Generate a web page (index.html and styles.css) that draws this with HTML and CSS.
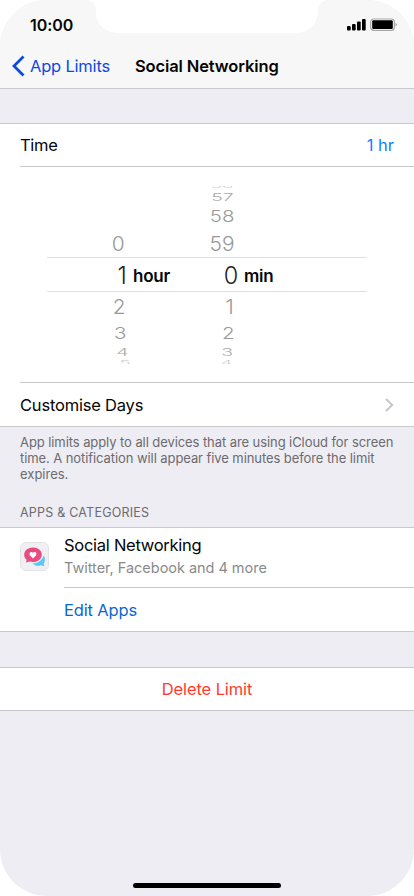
FILE: index.html
```html
<!DOCTYPE html>
<html lang="en">
<head>
<meta charset="utf-8">
<title>App Limits</title>
<link rel="stylesheet" href="styles.css">
</head>
<body>
<main class="phone">
  <header class="header">
    <svg class="notch" width="240" height="34" viewBox="0 0 240 34"><path d="M0 0C5 1 8 4 8 10V12C8 25 17 33 33 33H206C221 33 230 24 230 11C230 4 234 1 239 0Z" fill="#fff"/></svg>
    <div class="status">
      <span class="clock">10:00</span>
      <svg width="52" height="14" viewBox="0 0 52 14">
        <rect x="1" y="8" width="3.7" height="4.5" rx="1"/><rect x="6" y="6" width="3.7" height="6.500" rx="1"/><rect x="11" y="3.500" width="3.700" height="9" rx="1"/><rect x="16" y="1" width="3.700" height="11.500" rx="1"/>
        <rect x="24.700" y="1" width="23.600" height="11.300" rx="3" fill="#fff" stroke="#a5a5a5" stroke-width="1.200"/><rect x="26.200" y="2.300" width="20.600" height="8.700" rx="1.200"/><path d="M49.500 4.700Q52.500 6.600 49.500 8.500Z" fill="#a5a5a5"/>
      </svg>
    </div>
    <nav class="nav">
      <svg class="back" width="13" height="22" viewBox="0 0 13 22"><path d="M11.500 1.500L2 11L11.500 20.500" fill="none" stroke="#0b49e5" stroke-width="2.800"/></svg>
      <span class="parent">App Limits</span>
      <h1 class="title">Social Networking</h1>
    </nav>
  </header>

  <section class="group">
    <div class="row time"><span class="t-time">Time</span><span class="value">1 hr</span></div>
    <div class="picker">
      <div class="wheel hours">
        <span class="edge top"></span><span class="far up"></span><span class="mid up"></span>
        <span class="near up"><i>0</i></span>
        <span class="now"><i>1</i></span>
        <span class="near down"><i>2</i></span><span class="mid down"><i>3</i></span><span class="far down"><i>4</i></span><span class="edge bottom"><i>5</i></span>
      </div>
      <b class="unit hour">hour</b>
      <div class="wheel minutes">
        <span class="edge top"><i>56</i></span><span class="far up"><i>57</i></span><span class="mid up"><i>58</i></span>
        <span class="near up"><i>59</i></span>
        <span class="now"><i>0</i></span>
        <span class="near down"><i>1</i></span><span class="mid down"><i>2</i></span><span class="far down"><i>3</i></span><span class="edge bottom"><i>4</i></span>
      </div>
      <b class="unit min">min</b>
    </div>
    <div class="row customise"><span class="t-custom">Customise Days</span>
      <svg width="9" height="14" viewBox="0 0 9 14"><path d="M1 1L7.300 7L1 13" fill="none" stroke="#c4c4c9" stroke-width="1.800"/></svg>
    </div>
  </section>

  <p class="note"><span class="n1">App limits apply to all devices that are using iCloud for screen</span><br><span class="n2">time. A notification will appear five minutes before the limit</span><br><span class="n3">expires.</span></p>
  <h2 class="heading">APPS &amp; CATEGORIES</h2>

  <section class="group apps">
    <svg class="icon" width="29" height="29" viewBox="0 0 29 29">
      <rect x=".5" y=".5" width="28" height="28" rx="5.500" fill="#efeff4" stroke="#e2e2e7"/>
      <path d="M23.500 13.500C25.800 16.500 25 20 23.700 21.300L24.200 24.200L21 23.300C18 24.500 14.500 23.500 12.700 21.500C18.500 21.200 22.500 18 23.500 13.500Z" fill="#5ac8fa"/>
      <path d="M13 5.500C18 5.500 21.800 8.600 21.800 12.700S18 20 13 20C11.800 20 10.800 19.800 9.800 19.500L6 20.500L6.600 17.700C4.900 16.500 4.200 14.700 4.200 12.700C4.200 8.600 8 5.500 13 5.500Z" fill="#ea4c80"/>
      <path d="M13 16.500L10.300 13.700C8.200 11.500 11 8.300 13 10.800C15 8.300 17.800 11.500 15.700 13.700Z" fill="#fff"/>
    </svg>
    <div class="list">
      <div class="app"><span class="name">Social Networking</span><span class="sub">Twitter, Facebook and 4 more</span></div>
      <div class="edit"><span class="t-edit">Edit Apps</span></div>
    </div>
  </section>

  <section class="group delete"><span class="t-delete">Delete Limit</span></section>
  <div class="home"></div>
</main>
</body>
</html>
```
FILE: styles.css
```css
* { box-sizing: border-box; }
body { margin: 0; background: #fff; font-family: Inter, "Liberation Sans", sans-serif; font-size: 16.5px; color: #050505; }
.phone { position: relative; width: 414px; height: 896px; overflow: hidden; background: #eeedf3; border-radius: 47px; }
svg { display: block; flex: none; }
span, b, h1 { white-space: nowrap; }
.header { position: relative; height: 89px; background: #f7f7f7; border-bottom: 1px solid #c9c9cc; }
.notch { position: absolute; left: 88px; top: 0; }
.status { height: 44px; display: flex; justify-content: space-between; align-items: center; padding: 5px 16px 0 30px; }
.clock { font-weight: 600; font-size: 16px; letter-spacing: -.05px; }
.nav { height: 44px; display: flex; align-items: center; padding-left: 12px; }
.parent { margin-left: 5px; width: 105px; color: #0b49e5; letter-spacing: -.2px; }
.title { margin: 0; font-size: 16.5px; font-weight: 600; letter-spacing: -.12px; }
.group { background: #fff; border-top: 1px solid #c9c9cc; border-bottom: 1px solid #c9c9cc; margin-top: 34px; }
.row { display: flex; justify-content: space-between; align-items: center; height: 43px; padding-right: 20px; margin-left: 20px; }
.time { border-bottom: 1px solid #c9c9cc; }
.t-time { letter-spacing: -.3px; }
.t-custom { letter-spacing: -.2px; }
.value { color: #157efb; }
.customise { height: 44px; border-top: 1px solid #c9c9cc; }
.picker { height: 215px; display: flex; justify-content: flex-start; padding: 19px 47px 0; background: linear-gradient(#e0e0e0, #e0e0e0) 47px 90px / 320px 1px no-repeat, linear-gradient(#e0e0e0, #e0e0e0) 47px 124px / 320px 1px no-repeat; }
.wheel { display: flex; flex-direction: column; color: #a9a9a9; font-size: 23.5px; font-weight: 300; }
.wheel > span { display: flex; align-items: center; justify-content: center; }
.wheel i { font-style: normal; line-height: 28px; flex: none; }
.hours { width: 56px; margin-left: 43px; }
.minutes { width: 60px; }
.edge { height: 5px; overflow: hidden; }
.far { height: 14px; }
.mid { height: 24px; }
.near { height: 29px; }
.now { height: 34px; color: #222; font-size: 23.5px; }
.near i { transform: scale(.89, .85); color: #999; }
.mid i { transform: scale(.87, .66); color: #999; }
.mid.down i { transform: translateY(1px) scale(.87, .66); }
.far i { transform: scale(.83, .43); color: #aaa; }
.far.down i { transform: translateY(1px) scale(.83, .43); }
.now i { transform: translateY(.5px); }
.edge i { color: #ccc; }
.edge.top { align-items: flex-end; }
.edge.top i { transform: translateY(9px) scale(.8, .25); }
.edge.bottom i { transform: translateY(.5px) scale(.8, .25); }
.hours .now { padding-left: 8px; }
.hours .near.down { padding-left: 2px; }
.hours .mid { padding-left: 4px; }
.hours .far { padding-left: 8px; }
.hours .edge { padding-left: 13px; }
.minutes .near.up, .minutes .mid.up { padding-right: 2px; }
.minutes .far.up, .minutes .edge.top { padding-right: 1px; }
.minutes .now { padding-left: 16px; }
.minutes .near.down { padding-left: 14px; }
.minutes .mid.down { padding-left: 11px; }
.minutes .far.down { padding-left: 9px; }
.minutes .edge.bottom { padding-left: 7px; }
.unit { font-weight: 600; font-size: 17px; letter-spacing: -.2px; line-height: 24px; margin-top: 78px; }
.hour { width: 60px; margin-left: -13px; }
.min { margin-left: -9px; }
.note { margin: 7px 0 0 20px; font-size: 13px; line-height: 16px; color: #6b6b70; }
.n1, .n2 { letter-spacing: -.08px; }
.heading { margin: 23px 0 0 20px; height: 16px; font-size: 12.5px; line-height: 16px; font-weight: 400; letter-spacing: .22px; color: #6b6b70; }
.apps { display: flex; margin-top: 6px; height: 105px; padding-left: 20px; }
.icon { margin-top: 14px; }
.list { flex: 1; margin-left: 15px; }
.app { height: 60px; border-bottom: 1px solid #c9c9cc; display: flex; flex-direction: column; padding-top: 6px; }
.name { line-height: 23px; letter-spacing: -.27px; }
.sub { line-height: 22px; font-size: 14.5px; letter-spacing: -.03px; color: #8a8a8a; }
.edit { height: 43px; display: flex; align-items: center; color: #0b66d1; letter-spacing: -.15px; }
.delete { height: 44px; margin-top: 35px; padding-bottom: 1px; display: flex; justify-content: center; align-items: center; letter-spacing: -.1px; color: #ff3b30; }
.home { position: absolute; left: 133px; bottom: 8px; width: 148px; height: 5px; border-radius: 3px; background: #000; }
```
